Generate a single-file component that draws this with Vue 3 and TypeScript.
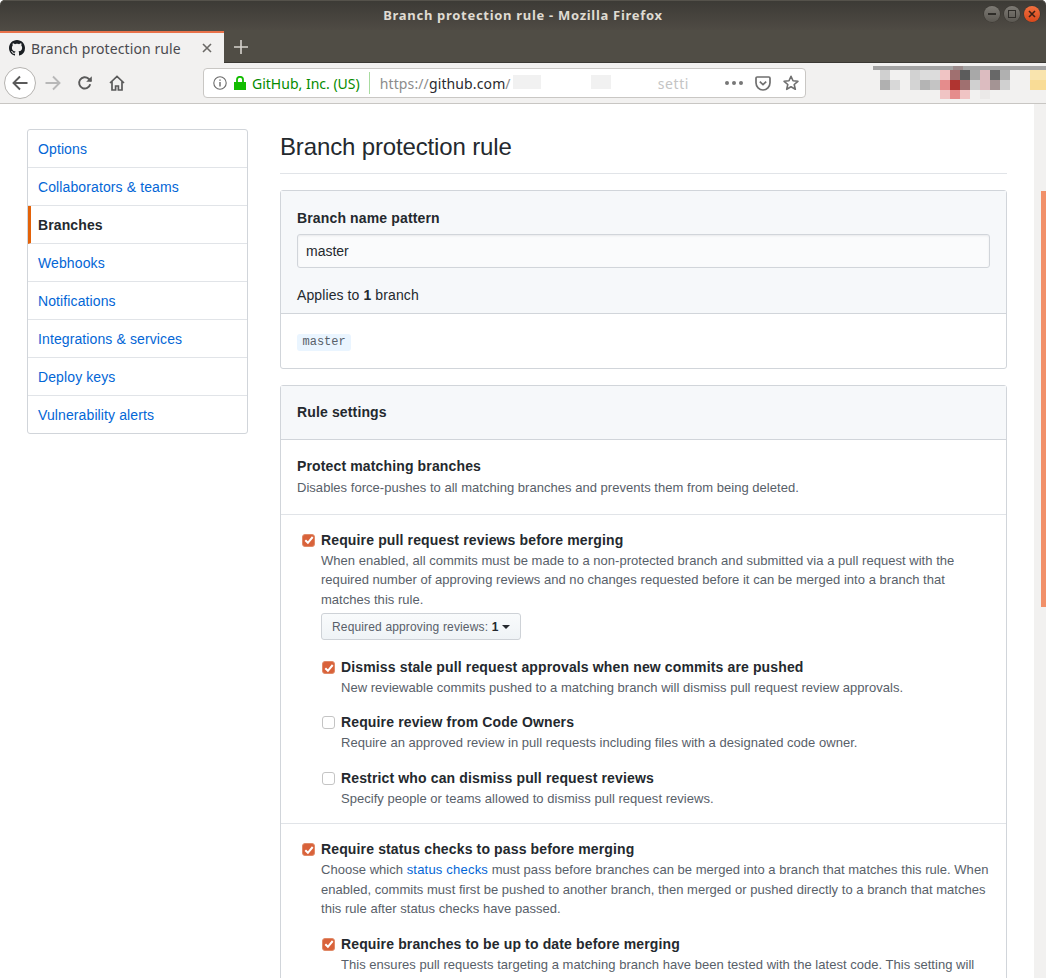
<script setup lang="ts">
const nav = ['Options', 'Collaborators & teams', 'Branches', 'Webhooks', 'Notifications', 'Integrations & services', 'Deploy keys', 'Vulnerability alerts']

interface Cell { x: number; y: number; w: number; h: number; c: string }
const mosaic: Cell[] = [
  { x: 0, y: 0, w: 173, h: 4, c: '#a3a3a3' },
  { x: 80, y: 0, w: 10, h: 4, c: '#9a8a8a' },
  { x: 7, y: 4, w: 10, h: 10, c: '#d0d0d0' },
  { x: 37, y: 4, w: 10, h: 10, c: '#d2d2d2' },
  { x: 47, y: 4, w: 20, h: 10, c: '#dcdcdc' },
  { x: 67, y: 4, w: 10, h: 10, c: '#f0c4c4' },
  { x: 77, y: 4, w: 10, h: 10, c: '#a07070' },
  { x: 87, y: 4, w: 10, h: 10, c: '#5c5c5c' },
  { x: 97, y: 4, w: 10, h: 10, c: '#a8a8a8' },
  { x: 107, y: 4, w: 10, h: 10, c: '#dcbcc0' },
  { x: 117, y: 4, w: 10, h: 10, c: '#686868' },
  { x: 127, y: 4, w: 10, h: 10, c: '#b0b0b0' },
  { x: 157, y: 4, w: 16, h: 10, c: '#f9e4ae' },
  { x: 7, y: 14, w: 10, h: 10, c: '#b0b0b0' },
  { x: 17, y: 14, w: 10, h: 10, c: '#d8d8d8' },
  { x: 37, y: 14, w: 10, h: 10, c: '#d4d4d4' },
  { x: 47, y: 14, w: 10, h: 10, c: '#b4b4b4' },
  { x: 57, y: 14, w: 10, h: 10, c: '#c4c4c4' },
  { x: 67, y: 14, w: 10, h: 10, c: '#e58c8c' },
  { x: 77, y: 14, w: 10, h: 10, c: '#b03430' },
  { x: 87, y: 14, w: 10, h: 10, c: '#a07070' },
  { x: 97, y: 14, w: 10, h: 10, c: '#d0d0d0' },
  { x: 107, y: 14, w: 10, h: 10, c: '#dcbcc0' },
  { x: 117, y: 14, w: 10, h: 10, c: '#a49494' },
  { x: 127, y: 14, w: 10, h: 10, c: '#d0d0d0' },
  { x: 157, y: 14, w: 16, h: 10, c: '#f9dc96' },
  { x: 67, y: 24, w: 10, h: 9, c: '#f0c4c4' },
  { x: 77, y: 24, w: 10, h: 9, c: '#e58c8c' },
  { x: 87, y: 24, w: 10, h: 9, c: '#f0c4c4' },
  { x: 107, y: 24, w: 10, h: 9, c: '#ebe9e8' },
]
function cellStyle(m: Cell) {
  return { left: m.x + 'px', top: m.y + 'px', width: m.w + 'px', height: m.h + 'px', background: m.c }
}
</script>

<template>
  <div class="screen">
    <header class="titlebar">
      <span class="title">Branch protection rule - Mozilla Firefox</span>
      <div class="winbtns">
        <span class="wb"><i class="wb-min"></i></span>
        <span class="wb"><i class="wb-max"></i></span>
        <span class="wb close">
          <svg width="8" height="8" viewBox="0 0 8 8"><path d="M1 1l6 6M7 1L1 7" stroke="#3d2015" stroke-width="1.6" /></svg>
        </span>
      </div>
    </header>

    <div class="tabbar">
      <div class="tab">
        <svg class="gh" width="16" height="16" viewBox="0 0 16 16"><path fill="#1b1f23" d="M8 0C3.58 0 0 3.58 0 8c0 3.54 2.29 6.53 5.47 7.59.4.07.55-.17.55-.38 0-.19-.01-.82-.01-1.49-2.01.37-2.53-.49-2.69-.94-.09-.23-.48-.94-.82-1.13-.28-.15-.68-.52-.01-.53.63-.01 1.08.58 1.23.82.72 1.21 1.87.87 2.33.66.07-.52.28-.87.51-1.07-1.78-.2-3.64-.89-3.64-3.95 0-.87.31-1.59.82-2.15-.08-.2-.36-1.02.08-2.12 0 0 .67-.21 2.2.82.64-.18 1.32-.27 2-.27.68 0 1.36.09 2 .27 1.53-1.04 2.2-.82 2.2-.82.44 1.1.16 1.92.08 2.12.51.56.82 1.27.82 2.15 0 3.07-1.87 3.75-3.65 3.95.29.25.54.73.54 1.48 0 1.07-.01 1.93-.01 2.2 0 .21.15.46.55.38A8.013 8.013 0 0 0 16 8c0-4.42-3.58-8-8-8z" /></svg>
        <span class="tab-label">Branch protection rule</span>
        <svg class="tab-x" width="12" height="12" viewBox="0 0 12 12"><path d="M2 2l8 8M10 2l-8 8" stroke="#6b6966" stroke-width="1.6" /></svg>
      </div>
      <svg class="newtab" width="14" height="14" viewBox="0 0 14 14"><path d="M7 0v14M0 7h14" stroke="#d6d3cd" stroke-width="1.6" /></svg>
    </div>

    <div class="toolbar">
      <span class="backbtn">
        <svg width="18" height="18" viewBox="0 0 18 18"><path d="M16.5 9H2.5M9 2.5L2.5 9 9 15.5" fill="none" stroke="#5a5a5a" stroke-width="1.9" /></svg>
      </span>
      <svg class="fwd" width="18" height="18" viewBox="0 0 18 18"><path d="M1.5 9h14M9 2.5L15.5 9 9 15.5" fill="none" stroke="#b8b8b8" stroke-width="1.9" /></svg>
      <svg class="reload" width="16" height="16" viewBox="0 0 16 16"><path d="M13.2 9.2A5.6 5.6 0 1 1 11.6 3.8L14 6" fill="none" stroke="#5a5a5a" stroke-width="1.9" /><path d="M14.8 1.2v5.6H9.2z" fill="#5a5a5a" /></svg>
      <svg class="home" width="16" height="16" viewBox="0 0 16 16"><path d="M1 8l7-6.5L15 8M3 6.5V15h3.6v-4h2.8v4H13V6.5" fill="none" stroke="#5a5a5a" stroke-width="1.7" /></svg>
      <div class="urlbar">
        <svg class="info" width="14" height="14" viewBox="0 0 14 14"><circle cx="7" cy="7" r="6.2" fill="none" stroke="#6a6a6a" stroke-width="1.1" /><path d="M7 6v4.4M7 3.4v1.4" stroke="#6a6a6a" stroke-width="1.4" /></svg>
        <svg class="lock" width="12" height="14" viewBox="0 0 12 14"><path d="M0 6h12v8H0z" fill="#12bc00" /><path d="M3 6.5V3.8a3 3 0 0 1 6 0v2.7" fill="none" stroke="#12bc00" stroke-width="1.8" /></svg>
        <span class="org">GitHub, Inc. (US)</span>
        <span class="sep"></span>
        <span class="url"><span class="dim">https://</span>github.com<span class="dim">/</span><span class="mask"><i class="m1"></i><i class="m2"></i></span><span class="dim fade">setti</span></span>
        <span class="dots"><i></i><i></i><i></i></span>
        <svg class="pocket" width="16" height="15" viewBox="0 0 16 15"><path d="M2.2 1h11.6c.7 0 1.2.5 1.2 1.2v4.6C15 10.800 11.800 14 8 14S1 10.800 1 6.800V2.200C1 1.500 1.500 1 2.200 1z" fill="none" stroke="#6f6f6f" stroke-width="1.7" /><path d="M4.800 5.600L8 8.600l3.200-3" fill="none" stroke="#6f6f6f" stroke-width="1.700" /></svg>
        <svg class="star" width="16" height="16" viewBox="0 0 16 16"><path d="M8 1.300l2 4.500 4.900.5-3.700 3.200 1.100 4.800L8 11.800l-4.300 2.500 1.100-4.800L1.100 6.300 6 5.800z" fill="none" stroke="#6f6f6f" stroke-width="1.600" stroke-linejoin="round" /></svg>
      </div>
      <div class="mosaic">
        <span v-for="(m, i) in mosaic" :key="i" class="cell" :style="cellStyle(m)"></span>
      </div>
    </div>

    <div class="viewport">
      <div class="page">
        <nav class="sidenav">
          <a v-for="n in nav" :key="n" class="nav-item" :class="{ selected: n === 'Branches' }">{{ n }}</a>
        </nav>

        <main class="main">
          <h2 class="heading">Branch protection rule</h2>

          <section class="box first">
            <div class="box-head pattern">
              <div class="strong">Branch name pattern</div>
              <input class="text-input" value="master" />
              <div class="applies">Applies to <b>1</b> branch</div>
            </div>
            <div class="tag-row"><span class="tag">master</span></div>
          </section>

          <section class="box">
            <div class="box-head rule">Rule settings</div>
            <div class="protect">
              <div class="strong">Protect matching branches</div>
              <p class="note">Disables force-pushes to all matching branches and prevents them from being deleted.</p>
            </div>

            <div class="group">
              <div class="opt">
                <span class="cb on"><svg width="10" height="10" viewBox="0 0 10 10"><path d="M1.300 5.200l2.600 2.600 4.800-5.800" fill="none" stroke="#fff" stroke-width="2" /></svg></span>
                <div class="opt-body">
                  <div class="strong">Require pull request reviews before merging</div>
                  <p class="note">When enabled, all commits must be made to a non-protected branch and submitted via a pull request with the required number of approving reviews and no changes requested before it can be merged into a branch that matches this rule.</p>
                  <button class="select">Required approving reviews: <b>1</b><i class="caret"></i></button>
                </div>
              </div>

              <div class="opt sub after-select">
                <span class="cb on"><svg width="10" height="10" viewBox="0 0 10 10"><path d="M1.300 5.200l2.600 2.600 4.800-5.800" fill="none" stroke="#fff" stroke-width="2" /></svg></span>
                <div class="opt-body">
                  <div class="strong">Dismiss stale pull request approvals when new commits are pushed</div>
                  <p class="note">New reviewable commits pushed to a matching branch will dismiss pull request review approvals.</p>
                </div>
              </div>

              <div class="opt sub tight">
                <span class="cb"></span>
                <div class="opt-body">
                  <div class="strong">Require review from Code Owners</div>
                  <p class="note">Require an approved review in pull requests including files with a designated code owner.</p>
                </div>
              </div>

              <div class="opt sub loose">
                <span class="cb"></span>
                <div class="opt-body">
                  <div class="strong">Restrict who can dismiss pull request reviews</div>
                  <p class="note">Specify people or teams allowed to dismiss pull request reviews.</p>
                </div>
              </div>
            </div>

            <div class="group">
              <div class="opt">
                <span class="cb on"><svg width="10" height="10" viewBox="0 0 10 10"><path d="M1.300 5.200l2.600 2.600 4.800-5.800" fill="none" stroke="#fff" stroke-width="2" /></svg></span>
                <div class="opt-body">
                  <div class="strong">Require status checks to pass before merging</div>
                  <p class="note">Choose which <a class="link">status checks</a> must pass before branches can be merged into a branch that matches this rule. When enabled, commits must first be pushed to another branch, then merged or pushed directly to a branch that matches this rule after status checks have passed.</p>
                </div>
              </div>
              <div class="opt sub after-note">
                <span class="cb on"><svg width="10" height="10" viewBox="0 0 10 10"><path d="M1.300 5.200l2.600 2.600 4.800-5.800" fill="none" stroke="#fff" stroke-width="2" /></svg></span>
                <div class="opt-body">
                  <div class="strong">Require branches to be up to date before merging</div>
                  <p class="note">This ensures pull requests targeting a matching branch have been tested with the latest code. This setting will</p>
                </div>
              </div>
            </div>
          </section>
        </main>
      </div>
      <div class="scrollbar"><span class="thumb"></span></div>
    </div>
  </div>
</template>

<style>
html, body { margin: 0; overflow: hidden; background: #fff; }
</style>

<style scoped>
.screen { width: 1046px; height: 978px; overflow: hidden; display: flex; flex-direction: column; font-family: "Liberation Sans", Arial, sans-serif; font-size: 14px; color: #24292e; background: #fff; }

.titlebar { height: 30px; flex: none; display: flex; align-items: center; justify-content: center; position: relative; background: linear-gradient(#3c3a35, #4f4b44); border-top-left-radius: 5px; border-top-right-radius: 5px; box-shadow: inset 0 1px 0 #55524b; }
.title { font-family: "Noto Sans", sans-serif; font-weight: 700; font-size: 13px; color: #dfdbd2; letter-spacing: 0.7px; }
.winbtns { position: absolute; right: 6px; top: 6px; display: flex; gap: 4px; }
.wb { width: 16px; height: 16px; border-radius: 50%; background: linear-gradient(#7d7a74, #5b5852); box-shadow: 0 0 0 0.5px #38352f; display: flex; align-items: center; justify-content: center; }
.wb.close { background: linear-gradient(#f0703f, #d9481b); }
.wb-min { width: 8px; height: 1.5px; background: #2e2c28; }
.wb-max { width: 6px; height: 6px; border: 1px solid #2e2c28; }

.tabbar { height: 33px; flex: none; background: #504d45; display: flex; align-items: center; box-shadow: inset 0 -1px 0 #3a3833; }
.tab { width: 224px; height: 32px; margin-top: 1px; align-self: flex-start; box-sizing: border-box; background: #f2f1f0; border-top: 2px solid #e9724a; display: flex; align-items: center; padding: 0 10px 0 9px; }
.gh { flex: none; }
.tab-label { font-family: "Noto Sans", sans-serif; font-size: 14px; color: #4a4a4f; margin-left: 6px; flex: 1; white-space: nowrap; letter-spacing: 0.09px; }
.tab-x { flex: none; margin-right: 1px; }
.newtab { margin-left: 10px; }

.toolbar { height: 40px; flex: none; background: #f2f1f0; border-bottom: 1px solid #c8c6c3; display: flex; align-items: center; position: relative; }
.backbtn { width: 32px; height: 32px; margin-left: 4px; border-radius: 50%; background: #fff; border: 1px solid #b5b3b0; box-sizing: border-box; display: flex; align-items: center; justify-content: center; flex: none; }
.fwd { margin-left: 8px; flex: none; }
.reload { margin-left: 15px; flex: none; }
.home { margin-left: 16px; flex: none; }
.urlbar { margin-left: 78px; width: 603px; height: 30px; box-sizing: border-box; background: #fff; border: 1px solid #c9c7c4; border-radius: 4px; display: flex; align-items: center; padding: 0 6px 0 9px; flex: none; }
.info { flex: none; }
.lock { margin-left: 7px; flex: none; }
.org { font-family: "Noto Sans", sans-serif; font-size: 14px; color: #058b00; margin-left: 6px; white-space: nowrap; }
.sep { width: 1px; height: 22px; background: #a8dca0; margin: 0 10px 0 9px; flex: none; }
.url { font-family: "Noto Sans", sans-serif; font-size: 14px; letter-spacing: 0.12px; color: #2a2a2e; flex: 1; white-space: nowrap; display: flex; align-items: center; overflow: hidden; }
.dim { color: #8c8c8c; }
.fade { color: #c4c4c4; letter-spacing: 0.6px; }
.mask { width: 147px; height: 20px; position: relative; }
.m1, .m2 { position: absolute; top: 2px; height: 14px; background: #f1f1f1; }
.m1 { left: 2px; width: 28px; }
.m2 { left: 80px; width: 20px; }
.dots { display: flex; gap: 3px; margin-right: 12px; flex: none; }
.dots i { width: 4px; height: 4px; border-radius: 50%; background: #777; }
.pocket { flex: none; margin-right: 12px; }
.star { flex: none; }
.mosaic { position: absolute; left: 873px; top: 3px; width: 173px; height: 33px; }
.cell { position: absolute; }

.viewport { flex: 1; display: flex; min-height: 0; }
.page { flex: 1; min-width: 0; display: flex; align-items: flex-start; gap: 32px; padding: 25px 27px 0; box-sizing: border-box; }
.scrollbar { width: 12px; flex: none; background: #f2f1f0; padding-top: 87px; padding-left: 7px; box-sizing: border-box; }
.thumb { display: block; width: 5px; height: 416px; background: #f19069; }

.sidenav { width: 221px; flex: none; box-sizing: border-box; border: 1px solid #d1d5da; border-radius: 3px; display: flex; flex-direction: column; }
.nav-item { height: 38px; box-sizing: border-box; padding: 0 10px; display: flex; align-items: center; color: #0366d6; border-bottom: 1px solid #e1e4e8; font-size: 14px; letter-spacing: 0.11px; }
.nav-item:last-child { height: 37px; border-bottom: 0; }
.nav-item.selected { color: #24292e; font-weight: 700; border-left: 3px solid #e36209; padding-left: 7px; }

.main { width: 727px; flex: none; }
.heading { margin: 0 0 16px; padding-bottom: 8px; font-size: 24px; line-height: 36px; font-weight: 400; letter-spacing: -0.14px; border-bottom: 1px solid #e1e4e8; color: #24292e; }
.box { border: 1px solid #d1d5da; border-radius: 3px; margin-bottom: 16px; }
.box-head { background: #f6f8fa; border-bottom: 1px solid #d1d5da; }
.pattern { padding: 17px 16px 7px; }
.strong { font-weight: 700; font-size: 14px; line-height: 21px; letter-spacing: 0.14px; color: #24292e; white-space: nowrap; }
.text-input { display: block; width: 100%; height: 34px; box-sizing: border-box; margin: 5px 0 17px; padding: 0 8px; font: 14px "Liberation Sans", Arial, sans-serif; color: #24292e; background: #fafbfc; border: 1px solid #d1d5da; border-radius: 3px; box-shadow: inset 0 1px 2px rgba(27, 31, 35, 0.075); outline: none; }
.applies { line-height: 21px; letter-spacing: 0.1px; }
.tag-row { height: 54px; box-sizing: border-box; padding: 3px 0 0 16px; display: flex; align-items: center; }
.tag { font-family: "Liberation Mono", monospace; font-size: 12px; line-height: 17px; height: 17px; padding: 0 5.5px; color: #586069; background: #eaf5ff; border-radius: 3px; }

.rule { height: 54px; box-sizing: border-box; padding: 0 0 1px 16px; display: flex; align-items: center; font-weight: 700; letter-spacing: 0.14px; }
.protect { padding: 16px 16px 16px; border-bottom: 1px solid #e1e4e8; }
.note { margin: 0; font-size: 13px; line-height: 19.5px; letter-spacing: 0.03px; color: #586069; }
.protect .note { margin-top: 1px; }
.group { padding: 15.25px 16px 14px 21px; border-bottom: 1px solid #e1e4e8; }
.opt { display: flex; align-items: flex-start; gap: 6px; }
.sub { margin-left: 20px; margin-top: 15px; }
.after-select { margin-top: 17px; }
.tight { margin-top: 14.5px; }
.loose { margin-top: 15.5px; }
.after-note { margin-top: 15px; }
.opt-body { flex: 1; min-width: 0; }
.cb { width: 13px; height: 13px; margin-top: 4px; flex: none; box-sizing: border-box; border: 1px solid #c4c4c4; border-radius: 3px; background: #fff; display: flex; align-items: center; justify-content: center; }
.cb.on { background: #d9623a; border-color: #e08a68; }
.select { display: flex; align-items: center; width: 200px; height: 27px; box-sizing: border-box; margin: 4px 0 0; padding: 0 10px; font: 12px "Liberation Sans", Arial, sans-serif; letter-spacing: 0.15px; color: #586069; white-space: pre; background: linear-gradient(#f9fbfc, #eff3f6); border: 1px solid #ced2d7; border-radius: 3px; }
.select b { color: #24292e; }
.caret { margin-left: 4px; width: 0; height: 0; border: 4px solid transparent; border-top-color: #24292e; border-bottom: 0; }
.link { color: #0366d6; letter-spacing: 0.2px; }
</style>
